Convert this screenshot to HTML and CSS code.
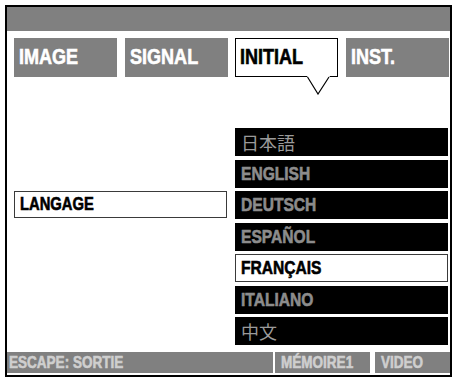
FILE: index.html
```html
<!DOCTYPE html>
<html lang="fr">
<head>
<meta charset="utf-8">
<link rel="stylesheet" href="styles.css">
</head>
<body>
<div class="screen">
  <div class="topbar"></div>
  <div class="tabs">
    <div class="tab"><span class="cond">IMAGE</span></div>
    <div class="tab"><span class="cond">SIGNAL</span></div>
    <div class="tab tab-active"><span class="cond">INITIAL</span>
      <svg class="pointer" width="23" height="19" viewBox="0 0 23 19"><polygon points="0,0 23,0 11,18" fill="#fff"/><polyline points="0.5,1 11,18 22,1" fill="none" stroke="#000" stroke-width="1.2"/></svg>
    </div>
    <div class="tab"><span class="cond">INST.</span></div>
  </div>
  <div class="menu">
    <div class="label"><span class="cond">LANGAGE</span></div>
    <div class="opt opt-1 cjk">日本語</div>
    <div class="opt opt-2"><span class="cond">ENGLISH</span></div>
    <div class="opt opt-3"><span class="cond">DEUTSCH</span></div>
    <div class="opt opt-4"><span class="cond">ESPAÑOL</span></div>
    <div class="opt opt-5 opt-sel"><span class="cond">FRANÇAIS</span></div>
    <div class="opt opt-6"><span class="cond">ITALIANO</span></div>
    <div class="opt opt-7 cjk">中文</div>
  </div>
  <div class="bottombar">
    <div class="hint"><span class="cond">ESCAPE: SORTIE</span></div>
    <div class="btn btn-mem"><span class="cond">MÉMOIRE1</span></div>
    <div class="btn btn-video"><span class="cond">VIDEO</span></div>
  </div>
</div>
</body>
</html>
```
FILE: styles.css
```css
html, body {
  margin: 0;
  padding: 0;
  background: #fff;
}
body {
  width: 456px;
  height: 378px;
  overflow: hidden;
  font-family: "Liberation Sans", Arial, sans-serif;
  font-weight: bold;
}
.cond {
  display: inline-block;
  white-space: nowrap;
  transform: scaleX(0.82);
  transform-origin: 0 50%;
  -webkit-text-stroke: 0.6px currentColor;
}
.screen {
  margin: 5px 0 0 5px;
  width: 443px;
  height: 368px;
  border: 2px solid #000;
  background: #fff;
  display: flex;
  flex-direction: column;
}
.topbar {
  height: 24px;
  background: #808080;
}
.tabs {
  margin-top: 7px;
  padding-left: 7px;
  display: grid;
  grid-template-columns: repeat(4, 103px);
  column-gap: 7.6px;
  height: 39px;
}
.tab {
  position: relative;
  background: #808080;
  color: #fff;
  font-size: 22px;
  line-height: 22px;
  padding: 8px 0 0 5px;
  box-sizing: border-box;
}
.tab-active {
  background: #fff;
  color: #000;
  border: 1px solid #000;
  padding: 7px 0 0 4px;
}
.pointer {
  position: absolute;
  left: 71px;
  top: 37px;
}
.menu {
  margin-top: 51px;
  padding-left: 7px;
  display: grid;
  grid-template-columns: 213px 213px;
  grid-template-rows: repeat(7, 28px);
  column-gap: 8px;
  row-gap: 3.5px;
}
.label {
  grid-column: 1;
  grid-row: 3;
  height: 27px;
  box-sizing: border-box;
  border: 1px solid #3a3a3a;
  color: #000;
  font-size: 18px;
  line-height: 25px;
  padding-left: 5px;
}
.opt {
  grid-column: 2;
  background: #000;
  color: #8c8c8c;
  font-size: 19px;
  line-height: 28px;
  padding-left: 6px;
}
.opt-1 { grid-row: 1; }
.opt-2 { grid-row: 2; }
.opt-3 { grid-row: 3; }
.opt-4 { grid-row: 4; }
.opt-5 { grid-row: 5; }
.opt-6 { grid-row: 6; }
.opt-7 { grid-row: 7; }
.opt-sel {
  background: #fff;
  color: #000;
  border: 1px solid #3a3a3a;
  line-height: 26px;
  padding-left: 5px;
}
.cjk {
  font-family: "Noto Sans CJK JP", "Noto Sans CJK SC", sans-serif;
  font-weight: normal;
  font-size: 18px;
  color: #9a9a9a;
}
.bottombar {
  margin-top: 7px;
  height: 21px;
  background: #808080;
  display: flex;
  color: #cfcfcf;
  font-size: 16.5px;
  line-height: 21px;
}
.hint {
  flex: 1;
  padding-left: 2px;
}
.btn {
  border-left: 2px solid #fff;
  padding-left: 6px;
  box-sizing: border-box;
}
.btn-mem {
  width: 97px;
}
.btn-video {
  width: 80px;
  border-left-width: 5px;
}
```
